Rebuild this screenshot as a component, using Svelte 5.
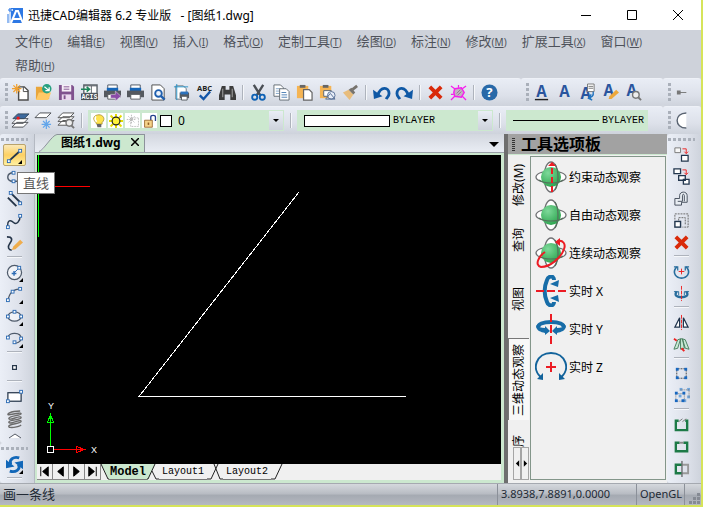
<script lang="ts">
  type Tool = { icon: string; label: string; flyout?: boolean; active?: boolean } | null;

  const menus = [
    ["文件", "F"], ["编辑", "E"], ["视图", "V"], ["插入", "I"], ["格式", "O"], ["定制工具", "T"],
    ["绘图", "D"], ["标注", "N"], ["修改", "M"], ["扩展工具", "X"], ["窗口", "W"], ["帮助", "H"],
  ];

  // shared bits for the 18x18 icons
  const node = (x: number, y: number) =>
    `<rect x="${x - 1.5}" y="${y - 1.5}" width="3" height="3" fill="#fff" stroke="#2f6db5"/>`;
  const block = (x: number, y: number, color = "#1767c0") =>
    `<rect x="${x}" y="${y}" width="3" height="3" fill="${color}"/>`;
  const printer = `<path d="M4 1h10v4H4z" fill="#fff" stroke="#4b5563"/><path d="M3 4h12v4H3z" fill="#1565b8"/><path d="M0 7h18v7H0z" fill="#55595f"/><path d="M4 11h10v5H4z" fill="#fff" stroke="#55595f"/>`;
  const letterA = `<text x="9" y="14" font-family="Open Sans, sans-serif" font-weight="bold" font-size="16" fill="#2a559e" text-anchor="middle">A</text>`;
  const lens = (x: number, y: number, c: string) =>
    `<circle cx="${x}" cy="${y}" r="3.5" fill="#eef3fa" stroke="${c}" stroke-width="2"/><path d="M${x + 2.5} ${y + 2.5}l4 4" stroke="${c}" stroke-width="2.5"/>`;
  const globe = `<ellipse cx="16" cy="16" rx="15" ry="6" fill="#fff" stroke="#6f7073" stroke-width="1.3"/><ellipse cx="16" cy="16" rx="7" ry="15" fill="#fff" stroke="#6f7073" stroke-width="1.3"/><circle cx="16" cy="16" r="10" fill="url(#ball)"/><path d="M4 19c5 4 19 4 24 0M20 3c4 6 4 20 0 26" fill="none" stroke="#55705c" stroke-width="1.2"/>`;

  const icons: Record<string, string> = {
    create: `<path d="M7 3h6l4 4v10H7z" fill="#fff" stroke="#4c4c4c" stroke-width="1.500"/><path d="M12 3v5h5" fill="none" stroke="#4c4c4c"/><path d="M5 0v10M0 5h10M1.500 1.500l7 7M8.500 1.500l-7 7" stroke="#f0a030" stroke-width="1.300"/>`,
    open: `<path d="M1 3h6l2 2h6v11H1z" fill="#e9a63c"/><path d="M4 9h13l-3 8H1z" fill="#ffc966"/><circle cx="12.500" cy="5" r="5" fill="#26a080"/><path d="M10 3l5 4M15 3.500V7h-4" fill="none" stroke="#fff" stroke-width="1.300"/>`,
    save: `<path d="M1 1h14l2 2v14H1z" fill="#80528e"/><path d="M4 1h10v7H4z" fill="#f6eef7"/><path d="M6 3h6M6 5.500h6" stroke="#80528e"/><path d="M4 11h10v6H4z" fill="#ead9ee"/><path d="M6 12h2v4H6z" fill="#80528e"/>`,
    acis: `<path d="M3 1h14v9H3z" fill="#fff" stroke="#5d646b" stroke-width="1.500"/><path d="M3 2h14M11 2v8" stroke="#5d646b"/><path d="M0 5.500h8M6 3l3 2.500L6 8" fill="none" stroke="#1c855a" stroke-width="1.700"/><path d="M0 10h18v7H0z" fill="#454d55"/><text x="9" y="16" font-family="Liberation Mono, monospace" font-size="7" font-weight="bold" fill="#fff" text-anchor="middle">ACIS</text>`,
    plot: printer + `<path d="M7 11h5V7.500l6 5.500-6 5V15H7z" fill="#8b4aa8" stroke="#eee" stroke-width=".5"/>`,
    print: printer,
    preview: `<path d="M2 1h9l4 4v12H2z" fill="#fff" stroke="#4b4b4b"/>` + lens(9, 10, "#1f5fae"),
    setup: `<path d="M3 2h8l3 3v11H3z" fill="#fff" stroke="#6a737c"/><path d="M1 3h15M4 0v17" stroke="#2894c9"/><path d="M7 9h10v6H7z" fill="#555b61"/><path d="M8 8h8v3H8z" fill="#2b72bd"/><path d="M9 13h6v4H9z" fill="#fff" stroke="#555b61"/>`,
    spell: `<text x="9" y="7" font-family="Open Sans, sans-serif" font-weight="bold" font-size="8" fill="#222" text-anchor="middle">ABC</text><path d="M4 12l4 4 7-8" fill="none" stroke="#1456a8" stroke-width="2.500"/>`,
    find: `<path d="M3 2h4v4h4V2h4l3 10v5h-6v-6H6v6H0v-5z" fill="#3d3d3d"/><path d="M4 5v9M14 5v9" stroke="#aaa"/>`,
    cut: `<path d="M4 1l7 11M14 1L7 12" stroke="#4a4f55" stroke-width="2.500"/><circle cx="5" cy="14" r="2.700" fill="none" stroke="#0f62b5" stroke-width="2"/><circle cx="13" cy="14" r="2.700" fill="none" stroke="#0f62b5" stroke-width="2"/>`,
    copy: `<path d="M1 1h7l3 3v9H1z" fill="#fff" stroke="#646c75"/><path d="M3 5h5M3 7.500h5M3 10h4" stroke="#7fa3c8"/><path d="M7 5h7l3 3v9H7z" fill="#fff" stroke="#646c75"/><path d="M9 9h5M9 11.500h6M9 14h6" stroke="#4c80b5"/>`,
    paste: `<path d="M1 2h12v13H1z" fill="#f5b453"/><path d="M4 1h6v3H4z" fill="#666"/><path d="M8 6h6l3 3v8H8z" fill="#fff" stroke="#666" stroke-width="1.300"/>`,
    pasteBlock: `<path d="M1 2h12v13H1z" fill="#f5b453"/><path d="M4 1h6v3H4z" fill="#666"/><path d="M5 7h8v6H5z" fill="#fff" stroke="#566476"/><circle cx="13" cy="12" r="4" fill="#e8eef8" stroke="#566f96"/><path d="M7 16l5-6 5 6z" fill="none" stroke="#566f96"/>`,
    match: `<path d="M1 9l6-3 5 5-4 6z" fill="#e8bd7d"/><path d="M7 6l3-2 4 5-2 2z" fill="#77736d"/><path d="M11 6l5-4" stroke="#77736d" stroke-width="3"/>`,
    undo: `<path d="M5 12c3-10 12-9 12-2 0 3-2 4-3 6" fill="none" stroke="#0f58a5" stroke-width="3"/><path d="M0 6l1 10 9-3z" fill="#0f58a5"/>`,
    redo: `<path d="M13 12C10 2 1 3 1 10c0 3 2 4 3 6" fill="none" stroke="#0f58a5" stroke-width="3"/><path d="M18 6l-1 10-9-3z" fill="#0f58a5"/>`,
    erase: `<path d="M3 3l12 12M15 3L3 15" stroke="#d92a0a" stroke-width="4"/>`,
    purge: `<path d="M1 2l4 3M17 2l-4 3M13 13l4 4M5 13l-4 4M9 1v3M1 11h3" stroke="#f51ded" stroke-width="1.300"/><path d="M5 5l7-1 3 5-3 5-7-1-1-4z" fill="#c4b0c2" stroke="#f51ded" stroke-width="1.500"/><path d="M7 10l4-4M8 12l4-4" stroke="#8d7a8c"/>`,
    help: `<circle cx="9" cy="9" r="8.500" fill="#2869a8"/><text x="9" y="14" font-family="Open Sans, sans-serif" font-weight="bold" font-size="14" fill="#fff" text-anchor="middle">?</text>`,
    textUnder: letterA + `<path d="M2 16.500h14" stroke="#222" stroke-width="1.500"/>`,
    text: letterA,
    textPage: `<g transform="translate(-2 2)">${letterA}</g><path d="M9 0h7v8H9z" fill="#fff" stroke="#777"/><path d="M10 2.500h5M10 4.500h5" stroke="#777"/><path d="M15 8c1 5-2 6-5 7M13 11l-3 4 4 2" fill="none" stroke="#2374bf" stroke-width="1.500"/>`,
    textPen: `<g transform="translate(-2 -1)">${letterA}</g><path d="M7 16l1-3 7-7 3 3-8 7z" fill="#eda83c"/>`,
    textFind: `<g transform="translate(-2 -1)">${letterA}</g><circle cx="11.500" cy="11.500" r="3.500" fill="#eee" stroke="#777" stroke-width="1.500"/><path d="M14 14l3 3" stroke="#777" stroke-width="2"/>`,
    dash: `<path d="M4 9h8" stroke="#777"/><path d="M2 7h4v4H2z" fill="#777"/>`,
    roundArc: `<path d="M12 1C-1 1-1 17 12 17" fill="#fff" stroke="#5a6472" stroke-width="1.500"/>`,
    layers: `<path d="M5 11h12l-5 5H0zM5 7h12l-5 5H0z" fill="#fff" stroke="#4b4f54"/><path d="M6 2h12l-5 5H1z" fill="#3d6a9e" stroke="#35495e"/><path d="M5 5h3v3H5z" fill="#f01818"/>`,
    layerFreeze: `<path d="M5 1h12l-5 5H0z" fill="#fff" stroke="#4b4f54"/><path d="M12 8v10M7 13h10M8.500 9.500l7 7M15.500 9.500l-7 7" stroke="#63a6ea" stroke-width="1.300"/>`,
    layerFind: `<path d="M5 9h12l-5 5H0zM5 5h12l-5 5H0zM5 1h12l-5 5H0z" fill="#fff" stroke="#555"/><circle cx="12" cy="11.500" r="3.500" fill="#eee" stroke="#777" stroke-width="1.500"/><path d="M14 14l3 3" stroke="#777" stroke-width="2"/>`,
    bulb: `<path d="M5 11C-1 5 4 1 9 1s9 5 4 10v2H6z" fill="#ffe34d" stroke="#a18a2e"/><path d="M5 3c-2 3-1 5 1 7" stroke="#fff" stroke-width="2" fill="none"/><path d="M6 13h6v4H7z" fill="#666"/>`,
    sun: `<path d="M9 0v18M0 9h18M2 2l14 14M16 2L2 16" stroke="#e6dc00" stroke-width="2.500"/><circle cx="9" cy="9" r="5" fill="#fff23a" stroke="#222" stroke-width="1.500"/>`,
    frozen: `<path d="M6 5h10v11H6z" fill="none" stroke="#999" stroke-dasharray="1 1"/><path d="M7 1v12M1 7h12M3 3l8 8M11 3l-8 8" stroke="#aaa" stroke-dasharray="2 1"/>`,
    unlock: `<path d="M10 9V4c0-3 6-3 6 0v5" fill="none" stroke="#23408c" stroke-width="1.700"/><path d="M2 8h10v9H2z" fill="#f5d38a" stroke="#8f5c22"/><path d="M7 11v3" stroke="#8f5c22" stroke-width="2"/>`,
    line: `<path d="M3 15L15 4" stroke="#26364a" stroke-width="2"/>` + node(3, 15) + node(15, 4),
    polyline: `<path d="M8 4C0 4 0 13 7 13h9" fill="none" stroke="#4f5b6b" stroke-width="1.500"/>` + node(8, 4) + node(8, 13),
    parallel: `<path d="M2 7l9 9M6 3l10 10" stroke="#26364a" stroke-width="2"/>` + node(5, 2) + node(15, 13),
    spline: `<path d="M2 15C1 7 5 7 8 10s7-1 7-7" fill="none" stroke="#26364a" stroke-width="1.500"/>` + node(2, 15) + node(15, 3),
    sketch: `<path d="M1 2c6 0 6 3 3 7s-1 7 2 7" fill="none" stroke="#26364a" stroke-width="1.700"/><path d="M6 16l2-4 7-7 3 3-8 7z" fill="#efad4d"/>`,
    circle: `<circle cx="9" cy="9" r="7.500" fill="#fff" fill-opacity=".5" stroke="#4f5b6b" stroke-width="1.300"/><path d="M8 10l5-5" stroke="#2f6db5"/><path d="M6 10h5M8.500 7.500v5" stroke="#2f6db5" stroke-width="1.500"/>` + node(14, 4),
    arc: `<path d="M2 16C3 8 8 3 16 3" fill="none" stroke="#4f5b6b" stroke-width="1.300"/>` + node(2, 15) + node(7, 6) + node(15, 3),
    ellipse: `<ellipse cx="9" cy="9" rx="7" ry="5" fill="#fff" fill-opacity=".5" stroke="#4f5b6b" stroke-width="1.300"/>` + node(2, 9) + node(16, 9) + node(9, 4),
    ellipseArc: `<path d="M2 8c1-6 14-6 14 1 0 4-5 5-7 5" fill="none" stroke="#4f5b6b" stroke-width="1.300"/>` + node(2, 8) + node(16, 9) + node(9, 13),
    point: `<rect x="7" y="7" width="4" height="4" fill="#fff" stroke="#26364a" stroke-width="1.300"/>`,
    rect: `<rect x="2" y="5" width="14" height="9" fill="#fff" stroke="#26364a" stroke-width="1.300"/>` + node(2, 14) + node(16, 4),
    coil: `<path d="M15 1C4 1 0 5 3 5s13-3 13-1S3 6 3 9s13-4 13-1S3 10 3 13s13-4 13-1-12 2-13 5 11 1 13-1" fill="none" stroke="#6b6b6b" stroke-width="1.500"/>`,
    sync: `<path d="M14 2C8 0 3 4 5 9M4 16c6 2 12-2 9-7" fill="none" stroke="#1267b8" stroke-width="3"/><path d="M0 4v9l9-2zM18 14V5L9 7z" fill="#1267b8"/>`,
    copyObj: `<path d="M2 2h6v5H2z" fill="#f7f7f7" stroke="#777"/><path d="M9 10h7v6H9z" fill="#fff" stroke="#22364e" stroke-width="1.300"/><path d="M10 3h4v5M12 6l2 2 2-2" fill="none" stroke="#e22"/>`,
    multiCopy: `<path d="M1 1h7v5H1zM6 8h7v5H6zM11 12h6v5h-6z" fill="#fff" stroke="#22364e" stroke-width="1.400"/><path d="M10 2h4v5M12 5l2 2 2-2" fill="none" stroke="#e22"/>`,
    offset: `<path d="M2 16V9h5V6c0-5 8-5 8 0v7H9v3z" fill="#e8edf3" stroke="#444e5b"/><path d="M5 12h5V6c0-2 2-2 2 0v6" fill="none" stroke="#444e5b"/>`,
    scale: `<path d="M2 8V2h14v14h-6M6 9V6h7v7" fill="none" stroke="#666" stroke-dasharray="2 1"/><rect x="2" y="10" width="6" height="6" fill="#fff" stroke="#22364e" stroke-width="1.500"/>`,
    rotate: `<path d="M4 4c-6 7 0 12 5 12s11-5 5-12" fill="none" stroke="#286d9d" stroke-width="1.700"/><path d="M1 4h4v4M17 4h-4v4" fill="none" stroke="#286d9d" stroke-width="1.300"/><path d="M9 6v6M6 9h6" stroke="#e22"/>`,
    rotate3d: `<path d="M4 7c-7 8 17 8 10 0" fill="none" stroke="#286d9d" stroke-width="2.500"/><path d="M1 7h5v4M17 7h-5v4" fill="none" stroke="#286d9d"/><path d="M9 1v16" stroke="#e22" stroke-dasharray="4 1"/>`,
    mirror: `<path d="M7 4v10H2zM11 4v10h5z" fill="#fff" stroke="#22364e" stroke-width="1.300"/><path d="M9 1v16" stroke="#e22" stroke-dasharray="4 1"/>`,
    mirror3d: `<path d="M5 4L1 14l4-1 3-10zM13 4l4 10-4-1-3-10zM8 3h2l2 10-4 1z" fill="#c9ead6" stroke="#477d5d"/><path d="M1 3l3 2M9 13l3 3" stroke="#e22" stroke-width="2"/>`,
    array: `<path d="M5 4h8M5 14h8M4 5v8M14 5v8" stroke="#444" stroke-dasharray="2 1"/>` + block(3, 3) + block(12, 3) + block(3, 12) + block(12, 12),
    array3d: block(7, 1, "#6fa5dc") + block(15, 1, "#6fa5dc") + block(15, 9, "#6fa5dc") + block(11, 13, "#6fa5dc") + block(6, 8, "#6fa5dc") + `<path d="M3 7h9v8H3zM8 3h9v8" fill="none" stroke="#777" stroke-dasharray="1 1"/>` + block(2, 5) + block(10, 5) + block(2, 13) + block(9, 13),
    breakObj: `<path d="M6 5H3v10h12V5h-2" fill="none" stroke="#1c7a47" stroke-width="2.500"/><path d="M6 6l4-3M10 6l4-3" stroke="#777"/>`,
    breakPoint: `<path d="M7 5H3v9h12V5h-4" fill="none" stroke="#1c7a47" stroke-width="2.500"/><path d="M7 4h4v2H7z" fill="#888"/>`,
    trim: `<path d="M9 5H3v9h6" fill="none" stroke="#1c7a47" stroke-width="2.500"/><path d="M10 5h6v9h-6" fill="none" stroke="#999" stroke-width="2"/><path d="M9.500 1v17" stroke="#333"/>`,
    orbit: globe + `<path d="M17 31V4" stroke="#ec1c24" stroke-width="2" stroke-dasharray="6 3"/><path d="M13 5l4-4 4 4z" fill="#ec1c24"/>`,
    freeOrbit: globe,
    contOrbit: globe + `<path d="M23 4c5-1 8 3 6 8-3 9-14 18-23 18C-1 28 4 19 10 15" fill="none" stroke="#ec1c24" stroke-width="2"/><path d="M25 1v8l-5-4z" fill="#ec1c24"/>`,
    spinX: `<path d="M19 5c0-5-6-4-7 0-3 7-3 15 0 22 1 4 7 5 7 0" fill="none" stroke="#176da8" stroke-width="4"/><path d="M15 9l8 3 1-7zM15 23l8-3 1 7z" fill="#176da8"/><path d="M1 16h30" stroke="#ec1c24" stroke-width="2" stroke-dasharray="8 3"/>`,
    spinY: `<path d="M4 15c-5-8 29-8 24 0" fill="none" stroke="#176da8" stroke-width="4"/><path d="M1 12c0 6 5 7 9 8v2l5-4-5-5v2c-4 0-7-1-9-3zM31 12c0 6-5 7-9 8v2l-5-4 5-5v2c4 0 7-1 9-3z" fill="#176da8"/><path d="M16 1v30" stroke="#ec1c24" stroke-width="2" stroke-dasharray="8 3"/>`,
    spinZ: `<path d="M7 27C-5 18 2 2 16 2s21 16 9 25" fill="none" stroke="#12639b" stroke-width="2"/><path d="M2 28l6 1V22zM30 28l-6 1V22z" fill="#12639b"/><path d="M16 11v10M11 16h10" stroke="#ec1c24" stroke-width="2"/>`,
  };

  const standardTools: Tool[] = [
    { icon: "create", label: "新建" }, { icon: "open", label: "打开" }, { icon: "save", label: "保存" },
    { icon: "acis", label: "ACIS" }, { icon: "plot", label: "输出" }, { icon: "print", label: "打印" },
    { icon: "preview", label: "打印预览" }, { icon: "setup", label: "页面设置" }, { icon: "spell", label: "拼写检查" },
    { icon: "find", label: "查找" }, null,
    { icon: "cut", label: "剪切" }, { icon: "copy", label: "复制" }, { icon: "paste", label: "粘贴" },
    { icon: "pasteBlock", label: "粘贴为块" }, { icon: "match", label: "特性匹配" }, null,
    { icon: "undo", label: "撤销" }, { icon: "redo", label: "重做" }, null,
    { icon: "erase", label: "删除" }, { icon: "purge", label: "清理" }, null,
    { icon: "help", label: "帮助" },
  ];
  const textTools: Tool[] = [
    { icon: "textUnder", label: "多行文字" }, { icon: "text", label: "单行文字" }, { icon: "textPage", label: "文字样式" },
    { icon: "textPen", label: "编辑文字" }, { icon: "textFind", label: "查找文字" },
  ];
  const layerTools: Tool[] = [
    { icon: "layers", label: "图层" }, { icon: "layerFreeze", label: "冻结图层" }, { icon: "layerFind", label: "图层浏览" }, null,
  ];
  const drawTools: Tool[] = [
    { icon: "line", label: "直线", flyout: true, active: true }, { icon: "polyline", label: "多段线" },
    { icon: "parallel", label: "多线" }, { icon: "spline", label: "样条曲线" }, { icon: "sketch", label: "徒手画" }, null,
    { icon: "circle", label: "圆", flyout: true }, { icon: "arc", label: "圆弧", flyout: true },
    { icon: "ellipse", label: "椭圆", flyout: true }, { icon: "ellipseArc", label: "椭圆弧", flyout: true }, null,
    { icon: "point", label: "点" }, null,
    { icon: "rect", label: "矩形" }, { icon: "coil", label: "螺旋" },
  ];
  const modifyTools: Tool[] = [
    { icon: "copyObj", label: "复制对象" }, { icon: "multiCopy", label: "多重复制" }, { icon: "offset", label: "偏移" },
    { icon: "scale", label: "缩放" }, { icon: "erase", label: "删除对象" }, null,
    { icon: "rotate", label: "旋转" }, { icon: "rotate3d", label: "三维旋转" }, null,
    { icon: "mirror", label: "镜像" }, { icon: "mirror3d", label: "三维镜像" }, null,
    { icon: "array", label: "阵列" }, { icon: "array3d", label: "三维阵列" }, null,
    { icon: "breakObj", label: "打断" }, { icon: "breakPoint", label: "打断于点" }, { icon: "trim", label: "修剪" },
  ];
  const paletteItems = [
    ["orbit", "约束动态观察"], ["freeOrbit", "自由动态观察"], ["contOrbit", "连续动态观察"],
    ["spinX", "实时 X"], ["spinY", "实时 Y"], ["spinZ", "实时 Z"],
  ];
  const sheetNav = [
    ["第一页", "M4 3v10M12 3v10L6 8z"], ["上一页", "M11 3v10L5 8z"],
    ["下一页", "M5 3v10l6-5z"], ["最后一页", "M12 3v10M4 3v10l6-5z"],
  ];
</script>

{#snippet glyph(name: string)}
  <svg class="glyph" viewBox="0 0 18 18" aria-hidden="true">{@html icons[name]}</svg>
{/snippet}

{#snippet tools(list: Tool[])}
  {#each list as tool}
    {#if tool}
      <button class="tool" class:active={tool.active} class:flyout={tool.flyout} aria-label={tool.label}>
        {@render glyph(tool.icon)}
      </button>
    {:else}
      <span class="sep"></span>
    {/if}
  {/each}
{/snippet}

<!-- gradient used by the globe icons -->
<svg class="defs" width="0" height="0" aria-hidden="true">
  <defs>
    <radialGradient id="ball" cx=".35" cy=".3" r=".8">
      <stop offset="0" stop-color="#7ed99a" />
      <stop offset="1" stop-color="#25a048" />
    </radialGradient>
  </defs>
</svg>

<div class="window">
  <header class="titlebar">
    <svg class="logo" viewBox="0 0 16 16" aria-hidden="true">
      <path d="M2 1h14v15H2z" fill="#2d78e4" />
      <path d="M4 16l5-12h2l5 12M6 12h8" fill="none" stroke="#fff" stroke-width="2" />
      <path d="M0 3h6M3 0v16" stroke="#fff" stroke-width="1.500" />
      <path d="M1 3h4M3 1v4M1 7v9" stroke="#2d78e4" />
    </svg>
    <h1>迅捷CAD编辑器 6.2 专业版 &nbsp;&nbsp;- [图纸1.dwg]</h1>
    <button class="win" aria-label="最小化"><svg viewBox="0 0 10 10"><path d="M0 5.500h10" /></svg></button>
    <button class="win" aria-label="最大化"><svg viewBox="0 0 10 10"><path d="M.5.500h9v9h-9z" /></svg></button>
    <button class="win" aria-label="关闭"><svg viewBox="0 0 10 10"><path d="M0 0l10 10M10 0L0 10" /></svg></button>
  </header>

  <nav class="menu">
    {#each menus as [name, key]}
      <button>{name}<small>(<u>{key}</u>)</small></button>
    {/each}
  </nav>

  <div class="bars">
    <div class="bar grow"><i class="grip"></i>{@render tools(standardTools)}</div>
    <div class="bar text-bar"><i class="grip"></i>{@render tools(textTools)}</div>
    <div class="bar edge"><i class="grip"></i>{@render tools([{ icon: "dash", label: "线性标注" }])}</div>
  </div>

  <div class="bars">
    <div class="bar grow">
      <i class="grip"></i>{@render tools(layerTools)}
      <label class="combo">
        {#each ["bulb", "sun", "frozen", "unlock"] as state}
          <span class="state">{@render glyph(state)}</span>
        {/each}
        <span class="swatch"></span>
        <select class="layer" aria-label="图层"><option>0</option></select>
        <span class="drop"></span>
      </label>
      <span class="sep"></span>
      <label class="combo">
        <span class="color"></span>
        <select aria-label="颜色"><option>BYLAYER</option></select>
        <span class="drop"></span>
      </label>
      <span class="sep"></span>
      <label class="combo linetype">
        <span class="stroke"></span>
        <select aria-label="线型"><option>BYLAYER</option></select>
      </label>
    </div>
    <div class="bar edge"><i class="grip"></i>{@render tools([{ icon: "roundArc", label: "圆角" }])}</div>
  </div>

  <main>
    <aside class="side">
      <div class="column">
        <i class="grip across"></i>
        {@render tools(drawTools)}
        <button class="more" aria-label="更多"><svg viewBox="0 0 14 6"><path d="M1 5l6-4 6 4" /></svg></button>
      </div>
      <div class="column last">
        <i class="grip across"></i>
        {@render tools([{ icon: "sync", label: "重生成", flyout: true }, null])}
      </div>
      <div class="tip" role="tooltip">直线</div>
    </aside>

    <section class="document">
      <div class="doc-tabs">
        <svg class="slope" viewBox="0 0 18 18" aria-hidden="true">
          <path d="M0 18C5 18 13 0 18 0v18z" fill="#cce8cf" />
          <path d="M0 17.500C4 17 13 1 18 .5" fill="none" stroke="#8d929b" />
        </svg>
        <div class="doc-tab">
          <span>图纸1.dwg</span>
          <button aria-label="关闭图纸"><svg viewBox="0 0 8 8"><path d="M0 0l8 8M8 0L0 8" /></svg></button>
        </div>
        <button class="doc-list" aria-label="图纸列表"></button>
      </div>

      <div class="sheet">
        <svg class="canvas" aria-label="绘图区">
          <g shape-rendering="crispEdges" fill="none">
            <path d="M1.500 0v82" stroke="#0f0" />
            <path d="M0 31.500h53" stroke="red" />
            <path d="M262 37L102 241.500h267" stroke="#fff" />
            <path d="M13.500 291v-31M10.500 267.500l3-8 3 8z" stroke="#0f0" />
            <path d="M17 294.500h31M39.500 291.500l8 3-8 3z" stroke="red" />
            <path d="M10.500 291.500h6v6h-6z" stroke="#fff" />
          </g>
          <text x="11" y="254">Y</text>
          <text x="54" y="298">X</text>
        </svg>
        <div class="sheet-tabs">
          {#each sheetNav as [label, d]}
            <button class="nav" aria-label={label}><svg viewBox="0 0 16 16"><path {d} /></svg></button>
          {/each}
          <svg class="cut" viewBox="0 0 8 16"><path class="fill" d="M0 0h8v16z" /><path d="M0 0l7 15h1" /></svg>
          <button class="page current">Model</button>
          <svg class="cut" viewBox="0 0 12 16"><path class="fill" d="M0 0h8L1 16H0z" /><path d="M0 15h1L8 0M5 7l4 8h3" /></svg>
          <button class="page">Layout1</button>
          <svg class="cut" viewBox="0 0 16 16"><path d="M0 15h4L11 0M7 0l6 15h3" /></svg>
          <button class="page">Layout2</button>
          <svg class="cut" viewBox="0 0 14 16"><path d="M0 15h4L11 0" /></svg>
        </div>
      </div>
    </section>

    <section class="palette">
      <h2><i class="grip dark"></i>工具选项板</h2>
      <div class="palette-body">
        <div class="vtabs">
          <button class="modify">修改(M)</button>
          <button class="query">查询</button>
          <button class="view">视图</button>
          <button class="chosen">三维动态观察</button>
          <button class="order">序</button>
          <div class="scrollers">
            <button aria-label="向前"><svg viewBox="0 0 6 8"><path d="M5 0v8L1 4z" /></svg></button>
            <button aria-label="向后"><svg viewBox="0 0 6 8"><path d="M1 0v8l4-4z" /></svg></button>
          </div>
        </div>
        <ul>
          {#each paletteItems as [icon, label]}
            <li>
              <button>
                <svg viewBox="0 0 32 32" aria-hidden="true">{@html icons[icon]}</svg>{label}
              </button>
            </li>
          {/each}
        </ul>
      </div>
    </section>

    <aside class="side right">
      <div class="column"><i class="grip across"></i>{@render tools(modifyTools)}</div>
    </aside>
  </main>

  <footer>
    <span class="hint">画一条线</span>
    <span class="coords">3.8938,7.8891,0.0000</span>
    <span class="gl">OpenGL</span>
    <svg class="resize" viewBox="0 0 11 11" aria-hidden="true">
      <path d="M8 0h3v3H8zM4 4h3v3H4zM8 4h3v3H8zM0 8h3v3H0zM4 8h3v3H4zM8 8h3v3H8z" />
    </svg>
  </footer>
</div>

<style>
  :global(body) {
    margin: 0;
  }
  .defs {
    position: absolute;
  }
  .window {
    box-sizing: border-box;
    display: flex;
    flex-direction: column;
    min-height: 100vh;
    border-right: 2px solid #d6e45a;
    border-bottom: 2px solid #d6e45a;
    background: #d2d6de;
    font: 12px "Noto Sans", "Noto Sans CJK SC", sans-serif;
    color: #000;
  }
  button {
    padding: 0;
    border: 0;
    background: none;
    color: inherit;
    font: inherit;
  }
  svg {
    display: block;
    flex: none;
  }

  .titlebar {
    display: flex;
    align-items: center;
    height: 30px;
    background: #fff;
  }
  .logo {
    width: 16px;
    height: 16px;
    margin: 0 5px 0 7px;
  }
  h1 {
    flex: 1;
    margin: 0;
    font-size: 12px;
    font-weight: normal;
    white-space: nowrap;
  }
  .win {
    display: grid;
    place-items: center;
    width: 46px;
    height: 28px;
  }
  .win svg {
    width: 10px;
    height: 10px;
    fill: none;
    stroke: #000;
  }

  .menu {
    display: flex;
    flex-wrap: wrap;
    column-gap: 15px;
    padding: 0 15px;
    background: #ced2da;
    color: #4e525b;
  }
  .menu button {
    box-sizing: border-box;
    height: 24px;
    padding-bottom: 2px;
    font-size: 13px;
    line-height: 20px;
    white-space: nowrap;
  }
  .menu small {
    font-size: 10px;
  }

  .bars {
    display: flex;
    height: 28px;
  }
  .bar {
    display: flex;
    align-items: center;
    box-sizing: border-box;
    padding-left: 5px;
    border-top: 1px solid #eef1f7;
    border-radius: 3px;
    background: linear-gradient(#e9edf5, #dde1ea 60%, #ced3dc);
  }
  .bar.grow {
    flex: 1;
    min-width: 0;
  }
  .text-bar {
    width: 142px;
  }
  .edge {
    width: 38px;
    overflow: hidden;
  }
  .grip {
    flex: none;
    width: 3px;
    height: 20px;
    margin-right: 1px;
    background: repeating-linear-gradient(#aab0ba 0 3px, transparent 3px 5px);
  }
  .grip.across {
    width: 27px;
    height: 3px;
    margin: 4px 0 3px;
    background: repeating-linear-gradient(90deg, #aab0ba 0 3px, transparent 3px 5px);
  }
  .tool {
    position: relative;
    display: grid;
    place-items: center;
    flex: none;
    width: 23px;
    height: 22px;
  }
  .glyph {
    width: 17px;
    height: 17px;
    overflow: visible;
  }
  .tool.active {
    box-sizing: border-box;
    border: 1px solid #b9a36c;
    border-radius: 2px;
    background: linear-gradient(#fbe9b8, #fdd063 50%, #fff0a0);
  }
  .tool.flyout::after {
    content: "";
    position: absolute;
    right: 3px;
    bottom: 1px;
    border-left: 4px solid transparent;
    border-bottom: 4px solid #000;
  }
  .sep {
    flex: none;
    box-sizing: border-box;
    width: 2px;
    height: 15px;
    margin: 0 3px;
    border-left: 1px solid #aeb3bc;
    border-right: 1px solid #f5f7fa;
  }

  .combo {
    display: flex;
    align-items: center;
    box-sizing: border-box;
    width: 196px;
    height: 21px;
    margin-right: 3px;
    background: #cce8cf;
  }
  .sep + .combo {
    margin-left: 2px;
  }
  .combo select {
    flex: 1;
    min-width: 0;
    padding: 0;
    border: 0;
    background: none;
    color: #000;
    font: 10px "Liberation Mono", monospace;
    appearance: none;
  }
  .combo .layer {
    padding-left: 6px;
    font: 12px "Noto Sans", sans-serif;
  }
  .state {
    display: grid;
    place-items: center;
    width: 15px;
    height: 15px;
    margin-left: 2px;
    background: #fff;
  }
  .state:first-child {
    margin-left: 3px;
  }
  .state .glyph {
    width: 14px;
    height: 14px;
  }
  .swatch {
    box-sizing: border-box;
    width: 12px;
    height: 12px;
    margin-left: 3px;
    border: 1px solid #000;
    background: #fff;
  }
  .color {
    box-sizing: border-box;
    width: 86px;
    height: 12px;
    margin: 0 3px 0 7px;
    border: 1px solid #000;
    background: #fff;
  }
  .stroke {
    width: 86px;
    height: 1px;
    margin: 0 3px 0 7px;
    background: #000;
  }
  .linetype {
    width: 142px;
  }
  .drop {
    display: grid;
    place-items: center;
    width: 14px;
    height: 19px;
    margin-right: 1px;
    background: linear-gradient(#e9edf5, #ced3dc);
    pointer-events: none;
  }
  .drop::after {
    content: "";
    border: 3px solid transparent;
    border-top-color: #000;
    border-bottom: 0;
  }

  main {
    display: flex;
    flex: 1;
  }
  .side {
    position: relative;
    display: flex;
    flex-direction: column;
    width: 34px;
  }
  .column {
    display: flex;
    flex-direction: column;
    align-items: center;
    box-sizing: border-box;
    padding-right: 5px;
    border-radius: 3px;
    background: linear-gradient(90deg, #ebeff7, #dde1ea 60%, #ced3dc);
  }
  .column.last,
  .right .column {
    flex: 1;
  }
  .right .grip {
    margin-bottom: 2px;
  }
  .column .sep {
    width: 15px;
    height: 2px;
    margin: 2px 0 3px;
    border: 0;
    border-top: 1px solid #aeb3bc;
    border-bottom: 1px solid #f5f7fa;
  }
  .more {
    display: grid;
    place-items: center;
    width: 22px;
    height: 14px;
  }
  .more svg {
    width: 14px;
    height: 6px;
    fill: #fff;
    stroke: #555b65;
  }
  .tip {
    position: absolute;
    z-index: 1;
    top: 38px;
    left: 17px;
    padding: 0 5px;
    border: 1px solid #767676;
    background: #fff;
    color: #575757;
    font-size: 13px;
    line-height: 20px;
    white-space: nowrap;
  }

  .document {
    display: flex;
    flex: 1;
    flex-direction: column;
    min-width: 0;
    border-left: 1px solid #b4b9c2;
  }
  .doc-tabs {
    display: flex;
    align-items: flex-end;
    height: 18px;
    padding-left: 4px;
    border-bottom: 1px solid #9ba0a9;
    background: linear-gradient(#d3d7df, #e9edf4);
  }
  .slope {
    width: 18px;
    height: 18px;
  }
  .doc-tab {
    display: flex;
    align-items: center;
    box-sizing: border-box;
    height: 18px;
    padding: 0 5px 3px 4px;
    border-top: 1px solid #8d929b;
    border-right: 1px solid #8d929b;
    background: #cce8cf;
    font-size: 12px;
    font-weight: bold;
    white-space: nowrap;
  }
  .doc-tab button {
    margin-left: 10px;
  }
  .doc-tab svg {
    width: 8px;
    height: 8px;
    fill: none;
    stroke: #000;
    stroke-width: 1.5;
  }
  .doc-list {
    align-self: center;
    margin: 2px 5px 0 auto;
    border: 5px solid transparent;
    border-top-color: #000;
    border-bottom: 0;
  }
  .sheet {
    display: flex;
    flex: 1;
    flex-direction: column;
    padding: 2px 3px 3px 2px;
    background: #cce8cf;
  }
  .canvas {
    flex: 1;
    width: 100%;
    background: #000;
  }
  .canvas text {
    fill: #fff;
    font: 9px "Liberation Sans", sans-serif;
  }
  .sheet-tabs {
    display: flex;
    height: 16px;
    background: #f0f0f0;
    font: 10px "Liberation Mono", monospace;
  }
  .nav {
    box-sizing: border-box;
    width: 16px;
    height: 16px;
    border-right: 1px solid #888;
    border-bottom: 1px solid #888;
  }
  .nav svg {
    width: 15px;
    height: 15px;
  }
  .nav path {
    stroke: #000;
  }
  .cut {
    height: 16px;
    fill: none;
    stroke: #222;
  }
  .cut .fill {
    fill: #cce8cf;
    stroke: none;
  }
  .page {
    box-sizing: border-box;
    height: 16px;
    padding: 0 3px;
    border-bottom: 1px solid #777;
  }
  .current {
    padding: 0 1px;
    background: #cce8cf;
    font-size: 12px;
    font-weight: bold;
  }

  .palette {
    display: flex;
    flex-direction: column;
    box-sizing: border-box;
    width: 163px;
    border-left: 4px solid #6e6e6e;
    background: #f0f0f0;
  }
  h2 {
    display: flex;
    align-items: center;
    height: 20px;
    margin: 0;
    padding-left: 4px;
    border-bottom: 1px solid #cce8cf;
    background: #a2a2a2;
    font-size: 16px;
    line-height: 20px;
  }
  .grip.dark {
    width: 3px;
    height: 13px;
    margin-right: 6px;
    background: repeating-linear-gradient(#333 0 1px, transparent 1px 2px);
  }
  .palette-body {
    display: flex;
    flex: 1;
  }
  .vtabs {
    display: flex;
    flex-direction: column;
    width: 22px;
    padding-top: 1px;
  }
  .vtabs > button {
    box-sizing: border-box;
    width: 21px;
    font-size: 12px;
    line-height: 18px;
    writing-mode: vertical-rl;
    text-orientation: sideways;
    transform: rotate(180deg);
    white-space: nowrap;
  }
  .vtabs .modify {
    height: 58px;
  }
  .vtabs .query {
    height: 52px;
  }
  .vtabs .view {
    height: 66px;
  }
  /* rotated by 180deg, so right and bottom are the sunken sides */
  .vtabs .chosen {
    height: 82px;
    margin-top: 6px;
    border-right: 1px solid #777;
    border-bottom: 1px solid #777;
    background: #f8f8f8;
  }
  .vtabs .order {
    height: 27px;
    overflow: hidden;
    text-align: left;
  }
  .scrollers {
    display: flex;
    flex: 1;
    padding: 0 0 3px 5px;
  }
  .scrollers button {
    display: grid;
    place-items: center;
    box-sizing: border-box;
    width: 8px;
    border: 1px solid #a5a5a5;
  }
  .scrollers svg {
    width: 5px;
    height: 7px;
  }
  ul {
    flex: 1;
    margin: 1px 1px 3px 0;
    padding: 1px 0 0 4px;
    border: 1px solid #83968a;
    list-style: none;
  }
  li button {
    display: flex;
    align-items: center;
    gap: 2px;
    height: 38px;
    white-space: nowrap;
  }
  li svg {
    width: 32px;
    height: 32px;
  }

  footer {
    display: flex;
    height: 21px;
    border-top: 1px solid #a5a9b0;
    background: linear-gradient(#d5d8dd, #b9bdc4 45%, #a5aab2 55%, #b5b9c1);
    color: #222a35;
    font-size: 11px;
    line-height: 20px;
  }
  .hint {
    flex: 1;
    padding-left: 3px;
    font-size: 13px;
  }
  .coords,
  .gl {
    box-sizing: border-box;
    width: 139px;
    padding-left: 3px;
    border-left: 1px solid #8b9099;
  }
  .gl {
    width: 49px;
    border-right: 1px solid #8b9099;
  }
  .resize {
    align-self: flex-end;
    width: 11px;
    height: 11px;
    margin: 0 1px 1px 4px;
    fill: #858a93;
  }
</style>
